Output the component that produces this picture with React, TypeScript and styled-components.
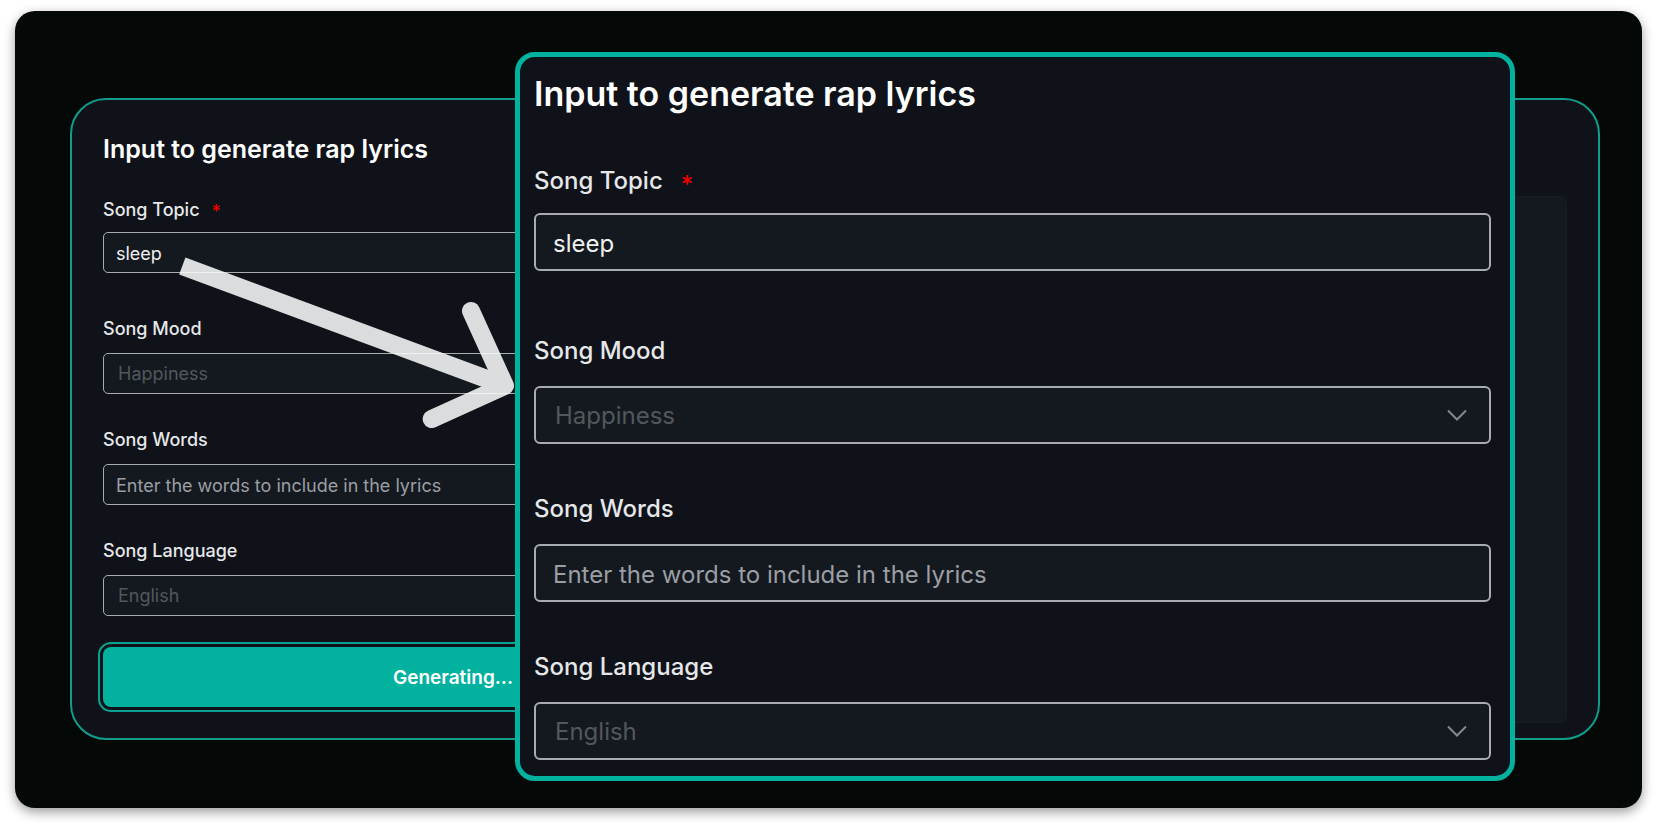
import React, { useId } from "react";
import styled, { createGlobalStyle, css } from "styled-components";

const teal = "#02b19e";

const GlobalStyle = createGlobalStyle`
  *, *::before, *::after { box-sizing: border-box; }
  body {
    margin: 0;
    background: #fff;
    font-family: Inter, "Liberation Sans", sans-serif;
  }
`;

type Size = "small" | "large";

const scale = {
  small: {
    title: 25, titleLine: 34, titleGap: 32,
    text: 18, label: 18, labelLine: 24, labelGap: 12, requiredGap: 10,
    control: 41, padding: 12, radius: 5, fieldGap: 34, extraGap: 10, starGap: 12, starDrop: 2,
  },
  large: {
    title: 34, titleLine: 42, titleGap: 50,
    text: 24, label: 24, labelLine: 32, labelGap: 19, requiredGap: 16,
    control: 58, padding: 17, radius: 6, fieldGap: 49, extraGap: 15, starGap: 18, starDrop: 4,
  },
};

const Stage = styled.main`
  position: relative;
  margin: 11px 15px 19px;
  padding: 87px 42px 68px 55px;
  border-radius: 20px;
  background: #040908;
  box-shadow: 0 4px 12px rgba(0, 0, 0, 0.4);
`;

const Card = styled.section`
  display: grid;
  grid-template-columns: 1fr 1fr;
  gap: 64px;
  padding: 32px 31px 15px;
  border: 2px solid #119c8b;
  border-radius: 36px;
  background: #0f1219;
`;

const Results = styled.section`
  margin-top: 64px;
  border: 1px solid #181d24;
  border-radius: 6px;
  background: #141920;
`;

const CardColumn = styled.div`
  padding-bottom: 16px;
`;

const Zoomed = styled.section`
  position: absolute;
  inset: 41px 127px 27px 500px;
  padding: 16px 19px 0 14px;
  border: 5px solid ${teal};
  border-radius: 20px;
  background: #0f1219;
`;

const Title = styled.h2<{ $size: Size }>`
  margin: 0 0 ${(p) => scale[p.$size].titleGap}px;
  color: #fff;
  font-size: ${(p) => scale[p.$size].title}px;
  line-height: ${(p) => scale[p.$size].titleLine}px;
  font-weight: 600;
  white-space: nowrap;
`;

const Fields = styled.div<{ $size: Size }>`
  display: flex;
  flex-direction: column;
  gap: ${(p) => scale[p.$size].fieldGap}px;
`;

const Field = styled.div<{ $size: Size; $required?: boolean }>`
  display: flex;
  flex-direction: column;
  gap: ${(p) => (p.$required ? scale[p.$size].requiredGap : scale[p.$size].labelGap)}px;
  margin-bottom: ${(p) => (p.$required ? scale[p.$size].extraGap : 0)}px;
`;

const Label = styled.label<{ $size: Size }>`
  display: flex;
  gap: ${(p) => scale[p.$size].starGap}px;
  height: ${(p) => scale[p.$size].labelLine}px;
  color: #e6e7e9;
  font-size: ${(p) => scale[p.$size].label}px;
  line-height: ${(p) => scale[p.$size].labelLine}px;
  font-weight: 500;
`;

const Star = styled.span<{ $size: Size }>`
  padding-top: ${(p) => scale[p.$size].starDrop}px;
  color: #f00000;
`;

const control = css<{ $size: Size }>`
  display: block;
  width: 100%;
  height: ${(p) => scale[p.$size].control}px;
  margin: 0;
  padding: 0 ${(p) => scale[p.$size].padding}px;
  border: ${(p) => (p.$size === "large" ? 2 : 1)}px solid #a9abaf;
  border-radius: ${(p) => scale[p.$size].radius}px;
  outline: none;
  background: #141920;
  font-family: inherit;
  font-size: ${(p) => scale[p.$size].text}px;
  font-weight: 400;
`;

const TextInput = styled.input<{ $size: Size }>`
  ${control}
  padding-top: 2px;
  color: #f0f0f1;
  &::placeholder { color: #9b9ea3; opacity: 1; }
`;

const SelectWrap = styled.div`
  position: relative;
`;

const Select = styled.select<{ $size: Size }>`
  ${control}
  padding-left: ${(p) => scale[p.$size].padding + 2}px;
  appearance: none;
  color: #53575c;
`;

const Chevron = styled.svg`
  position: absolute;
  right: 24px;
  top: 0;
  bottom: 0;
  margin: auto 0;
  width: 20px;
  height: 12px;
  fill: none;
  stroke: #85888d;
  stroke-width: 2;
  pointer-events: none;
`;

const Generate = styled.button`
  display: block;
  width: 100%;
  height: 60px;
  margin-top: 31px;
  padding: 0;
  border: 0;
  border-radius: 8px;
  outline: 2px solid #0aa392;
  outline-offset: 3px;
  background: ${teal};
  color: #fff;
  font-family: inherit;
  font-size: 19px;
  font-weight: 600;
`;

const Arrow = styled.svg`
  position: absolute;
  left: 160px;
  top: 240px;
  width: 345px;
  height: 180px;
  fill: none;
  stroke: #fcfeff;
  stroke-width: 18;
  opacity: 0.86;
  pointer-events: none;
`;

function SelectField({ label, value, size }: { label: string; value: string; size: Size }) {
  const id = useId();
  return (
    <Field $size={size}>
      <Label $size={size} htmlFor={id}>{label}</Label>
      <SelectWrap>
        <Select $size={size} id={id} defaultValue={value}>
          <option>{value}</option>
        </Select>
        <Chevron viewBox="0 0 20 12" aria-hidden="true">
          <path d="M1 1.5 L10 10.5 L19 1.5" />
        </Chevron>
      </SelectWrap>
    </Field>
  );
}

type TextFieldProps = { label: string; size: Size; value?: string; placeholder?: string; required?: boolean };

function TextField({ label, size, value, placeholder, required }: TextFieldProps) {
  const id = useId();
  return (
    <Field $size={size} $required={required}>
      <Label $size={size} htmlFor={id}>
        {label}
        {required && <Star $size={size}>*</Star>}
      </Label>
      <TextInput $size={size} id={id} type="text" defaultValue={value} placeholder={placeholder} />
    </Field>
  );
}

function LyricsForm({ size }: { size: Size }) {
  return (
    <>
      <Title $size={size}>Input to generate rap lyrics</Title>
      <Fields $size={size}>
        <TextField size={size} label="Song Topic" value="sleep" required />
        <SelectField size={size} label="Song Mood" value="Happiness" />
        <TextField size={size} label="Song Words" placeholder="Enter the words to include in the lyrics" />
        <SelectField size={size} label="Song Language" value="English" />
      </Fields>
    </>
  );
}

export default function App() {
  return (
    <>
      <GlobalStyle />
      <Stage>
        <Card>
          <CardColumn>
            <LyricsForm size="small" />
            <Generate type="button">Generating...</Generate>
          </CardColumn>
          <Results aria-label="Generated lyrics" />
        </Card>
        <Arrow viewBox="175 251 345 180" aria-hidden="true">
          <path d="M182.3 266 L505 385.7" />
          <path d="M471 311 L505 385.7 L431.7 419" strokeLinecap="round" strokeLinejoin="round" />
        </Arrow>
        <Zoomed>
          <LyricsForm size="large" />
        </Zoomed>
      </Stage>
    </>
  );
}
